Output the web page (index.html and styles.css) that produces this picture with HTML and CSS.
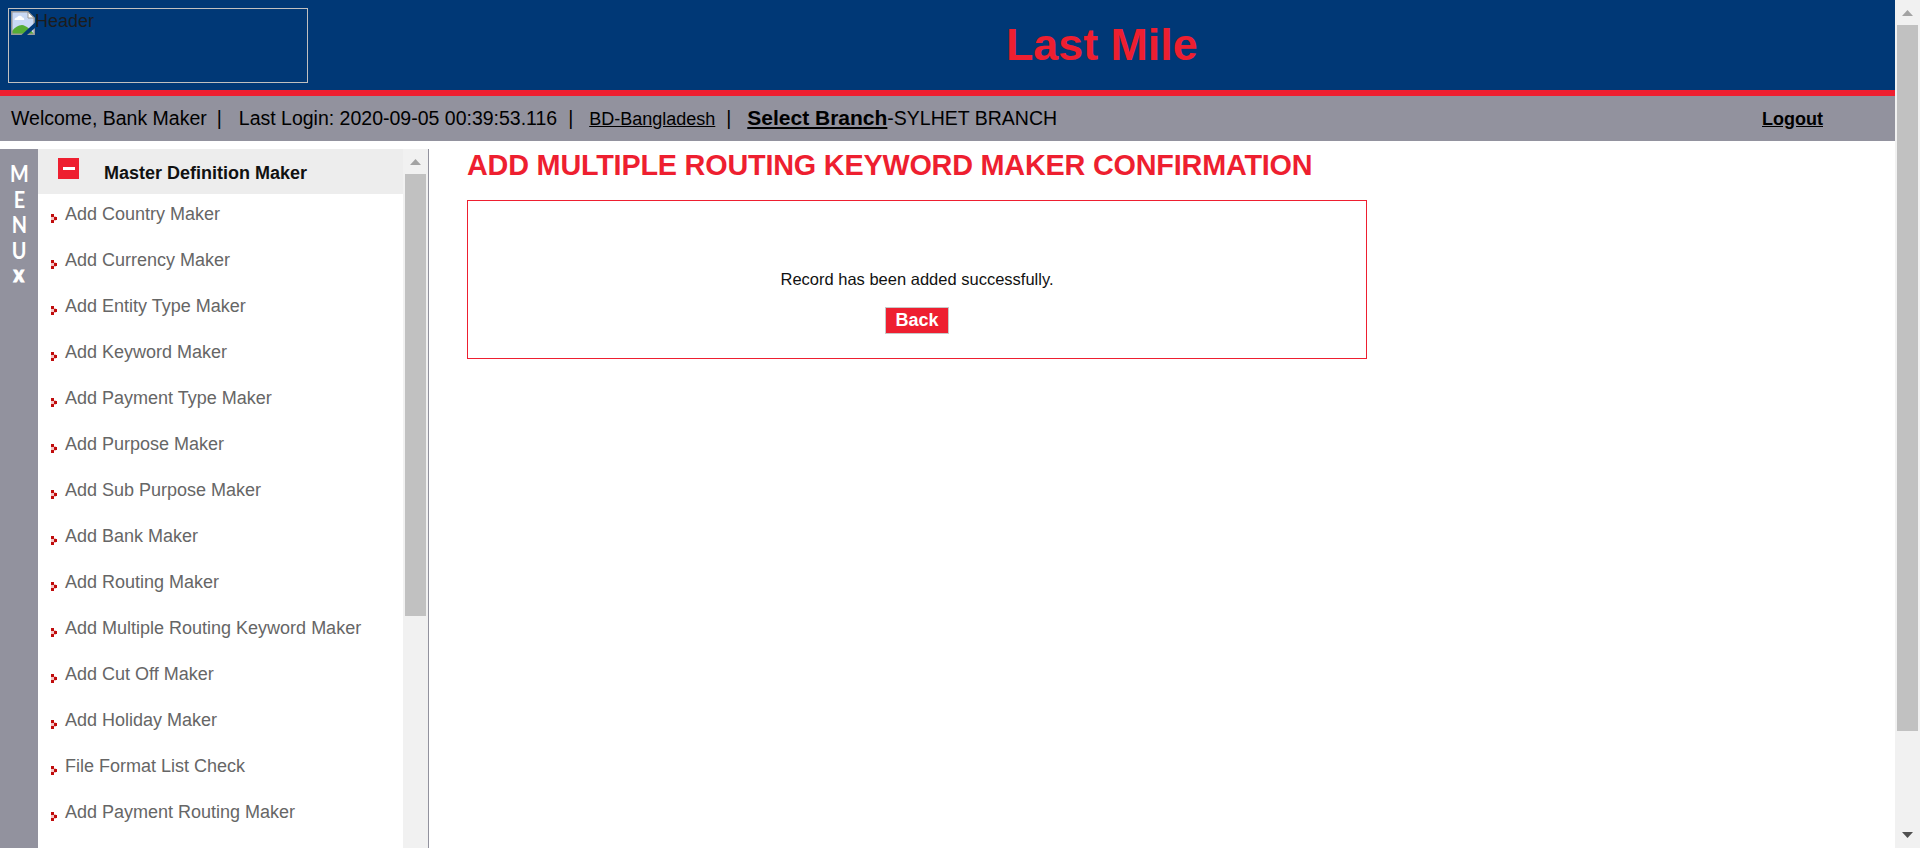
FILE: index.html
```
<!DOCTYPE html>
<html lang="en">
<head>
<meta charset="utf-8">
<title>Last Mile</title>
<link rel="stylesheet" href="styles.css">
</head>
<body>
<svg class="defs" width="0" height="0">
  <symbol id="bullet" viewBox="0 0 6 9">
    <path fill="#f3c4c4" d="M0 3h3v3H0zM3 2h2v1H3zM3 6h2v1H3z"/>
    <path fill="#c00d0d" d="M0 0h3v3H0zM3 3h3v3H3zM0 6h3v3H0z"/>
  </symbol>
</svg>
<div class="page">
  <div class="content">
    <header class="banner">
      <div class="logo">
        <svg class="broken" width="24" height="24" viewBox="0 0 24 24">
          <path fill="#c9d9f5" d="M1 1h16l6 6v16H1z"/>
          <path fill="#fff" d="M3.500 9c0-2 1.500-2.500 2.500-2.500C7 4 10.500 4 11.500 6.500c1.500 0 2 1.500 1.500 2.500z"/>
          <path fill="#56ad35" d="M1 23v-3c3-3.500 6-6 10-6 4 .5 8 4 12 9z"/>
          <path fill="none" stroke="#9a9a9a" stroke-width="1.500" d="M.8.8h16L23.200 7v16.200H.8z"/>
          <path fill="#fff" stroke="#9a9a9a" d="M17 1v6h6z"/>
          <path fill="#003876" d="M24 11.500L10.500 24H16l8-7z"/>
        </svg>
        <span class="alt">Header</span>
      </div>
      <h1 class="brand">Last Mile</h1>
    </header>
    <div class="status">
      <span>Welcome, Bank Maker</span><span class="bar b1">|</span>
      <span class="login">Last Login: 2020-09-05 00:39:53.116</span><span class="bar b2">|</span>
      <a class="country">BD-Bangladesh</a><span class="bar b3">|</span>
      <a class="branch">Select Branch</a><span>-SYLHET BRANCH</span>
      <a class="logout">Logout</a>
    </div>
    <div class="body">
      <div class="strip"><span>M</span><span>E</span><span>N</span><span>U</span><span class="close">x</span></div>
      <nav class="menu">
        <div class="group">
          <svg width="21" height="21" viewBox="0 0 21 21"><path fill="#ee1f30" d="M0 0h21v21H0z"/><path fill="#fff" d="M5 9h12v3H5z"/></svg>
          <span>Master Definition Maker</span>
        </div>
        <ul class="items">
          <li><svg><use href="#bullet"/></svg>Add Country Maker</li>
          <li><svg><use href="#bullet"/></svg>Add Currency Maker</li>
          <li><svg><use href="#bullet"/></svg>Add Entity Type Maker</li>
          <li><svg><use href="#bullet"/></svg>Add Keyword Maker</li>
          <li><svg><use href="#bullet"/></svg>Add Payment Type Maker</li>
          <li><svg><use href="#bullet"/></svg>Add Purpose Maker</li>
          <li><svg><use href="#bullet"/></svg>Add Sub Purpose Maker</li>
          <li><svg><use href="#bullet"/></svg>Add Bank Maker</li>
          <li><svg><use href="#bullet"/></svg>Add Routing Maker</li>
          <li><svg><use href="#bullet"/></svg>Add Multiple Routing Keyword Maker</li>
          <li><svg><use href="#bullet"/></svg>Add Cut Off Maker</li>
          <li><svg><use href="#bullet"/></svg>Add Holiday Maker</li>
          <li><svg><use href="#bullet"/></svg>File Format List Check</li>
          <li><svg><use href="#bullet"/></svg>Add Payment Routing Maker</li>
        </ul>
      </nav>
      <div class="scroll side">
        <svg width="11" height="6" viewBox="0 0 11 6"><path fill="#a3a3a3" d="M5.500 0L11 6H0z"/></svg>
        <div class="thumb"></div>
      </div>
      <main class="main">
        <h2>ADD MULTIPLE ROUTING KEYWORD MAKER CONFIRMATION</h2>
        <section class="box">
          <p>Record has been added successfully.</p>
          <button class="back">Back</button>
        </section>
      </main>
    </div>
  </div>
  <div class="scroll">
    <svg width="11" height="6" viewBox="0 0 11 6"><path fill="#a3a3a3" d="M5.500 0L11 6H0z"/></svg>
    <div class="thumb"></div>
    <svg class="down" width="11" height="6" viewBox="0 0 11 6"><path fill="#505050" d="M0 0h11L5.500 6z"/></svg>
  </div>
</div>
</body>
</html>
```
FILE: styles.css
```
* { box-sizing: border-box; }
body {
  margin: 0;
  background: #fff;
  color: #111;
  font-family: "Liberation Sans", Arial, sans-serif;
  overflow: hidden;
}
.defs { display: block; }
.page { display: flex; width: 1920px; height: 848px; }
.content { width: 1895px; height: 848px; display: flex; flex-direction: column; }

.banner {
  display: flex;
  flex: none;
  height: 96px;
  padding: 8px 0 0 8px;
  background: #003876;
  border-bottom: 6px solid #ee1f30;
}
.logo {
  display: flex;
  width: 300px;
  height: 75px;
  padding: 2px;
  border: 1px solid #c0c0c0;
}
.broken { flex: none; }
.alt { font-size: 18px; line-height: 20px; color: #1c1c1c; }
.brand { margin: 13px 0 0 698px; font-size: 44.8px; line-height: 46px; color: #ee1f30; }

.status {
  display: flex;
  flex: none;
  height: 45px;
  padding: 0 72px 0 11px;
  background: #92929e;
  color: #000;
  font-size: 19.5px;
  line-height: 44px;
  white-space: nowrap;
}
.status a { text-decoration: underline; }
.bar { width: 6px; }
.b1 { margin-left: 10px; }
.login { margin-left: 16px; }
.b2 { margin-left: 11px; }
.country { margin-left: 15px; font-size: 18px; line-height: 46px; }
.b3 { margin-left: 11px; }
.branch { margin-left: 15px; font-size: 21px; font-weight: bold; }
.logout { margin-left: auto; font-size: 18px; line-height: 46px; font-weight: bold; }

.body { display: flex; flex: 1; min-height: 0; margin-top: 8px; }
.strip {
  display: flex;
  flex-direction: column;
  align-items: center;
  width: 38px;
  padding-top: 12px;
  background: #92929e;
  color: #fff;
  font: 700 22px/25.5px Lato, sans-serif;
}
.strip span { transform: scaleX(0.9); }
.strip .close { font-weight: 900; line-height: 22px; -webkit-text-stroke: 1px #fff; }
.menu { width: 365px; overflow: hidden; }
.group {
  display: flex;
  height: 45px;
  padding: 9px 0 0 20px;
  background: #ededed;
  font-size: 18px;
  line-height: 30px;
  font-weight: bold;
}
.group span { margin-left: 25px; }
.items { margin: 0; padding: 0; list-style: none; }
.items li {
  display: flex;
  height: 46px;
  padding-left: 13px;
  color: #666;
  font-size: 18px;
  line-height: 40px;
  white-space: nowrap;
}
.items svg { width: 6px; height: 9px; margin: 20px 8px 0 0; }

.scroll {
  display: flex;
  flex-direction: column;
  align-items: center;
  width: 25px;
  padding: 10px 0;
  background: #f1f1f1;
}
.scroll svg { flex: none; }
.thumb { flex: none; width: 21px; height: 706px; margin-top: 9px; background: #c1c1c1; }
.down { margin-top: auto; }
.side { width: 26px; border-right: 1px solid #92929e; }
.side .thumb { height: 442px; }

.main { padding-left: 38px; }
.main h2 {
  margin: 0;
  font-size: 28.8px;
  line-height: 32px;
  letter-spacing: -0.2px;
  color: #ee1f30;
  white-space: nowrap;
}
.box {
  display: flex;
  flex-direction: column;
  align-items: center;
  width: 900px;
  height: 159px;
  margin-top: 19px;
  padding-top: 68px;
  border: 1px solid #ee1f30;
}
.box p { margin: 0; font-size: 16.5px; line-height: 20px; }
.back {
  width: 64px;
  height: 27px;
  margin-top: 18px;
  padding: 0 0 1px;
  background: #ee1f30;
  border: 1px solid #c8c8c8;
  color: #fff;
  font: bold 18px/24px "Liberation Sans", Arial, sans-serif;
}
```
